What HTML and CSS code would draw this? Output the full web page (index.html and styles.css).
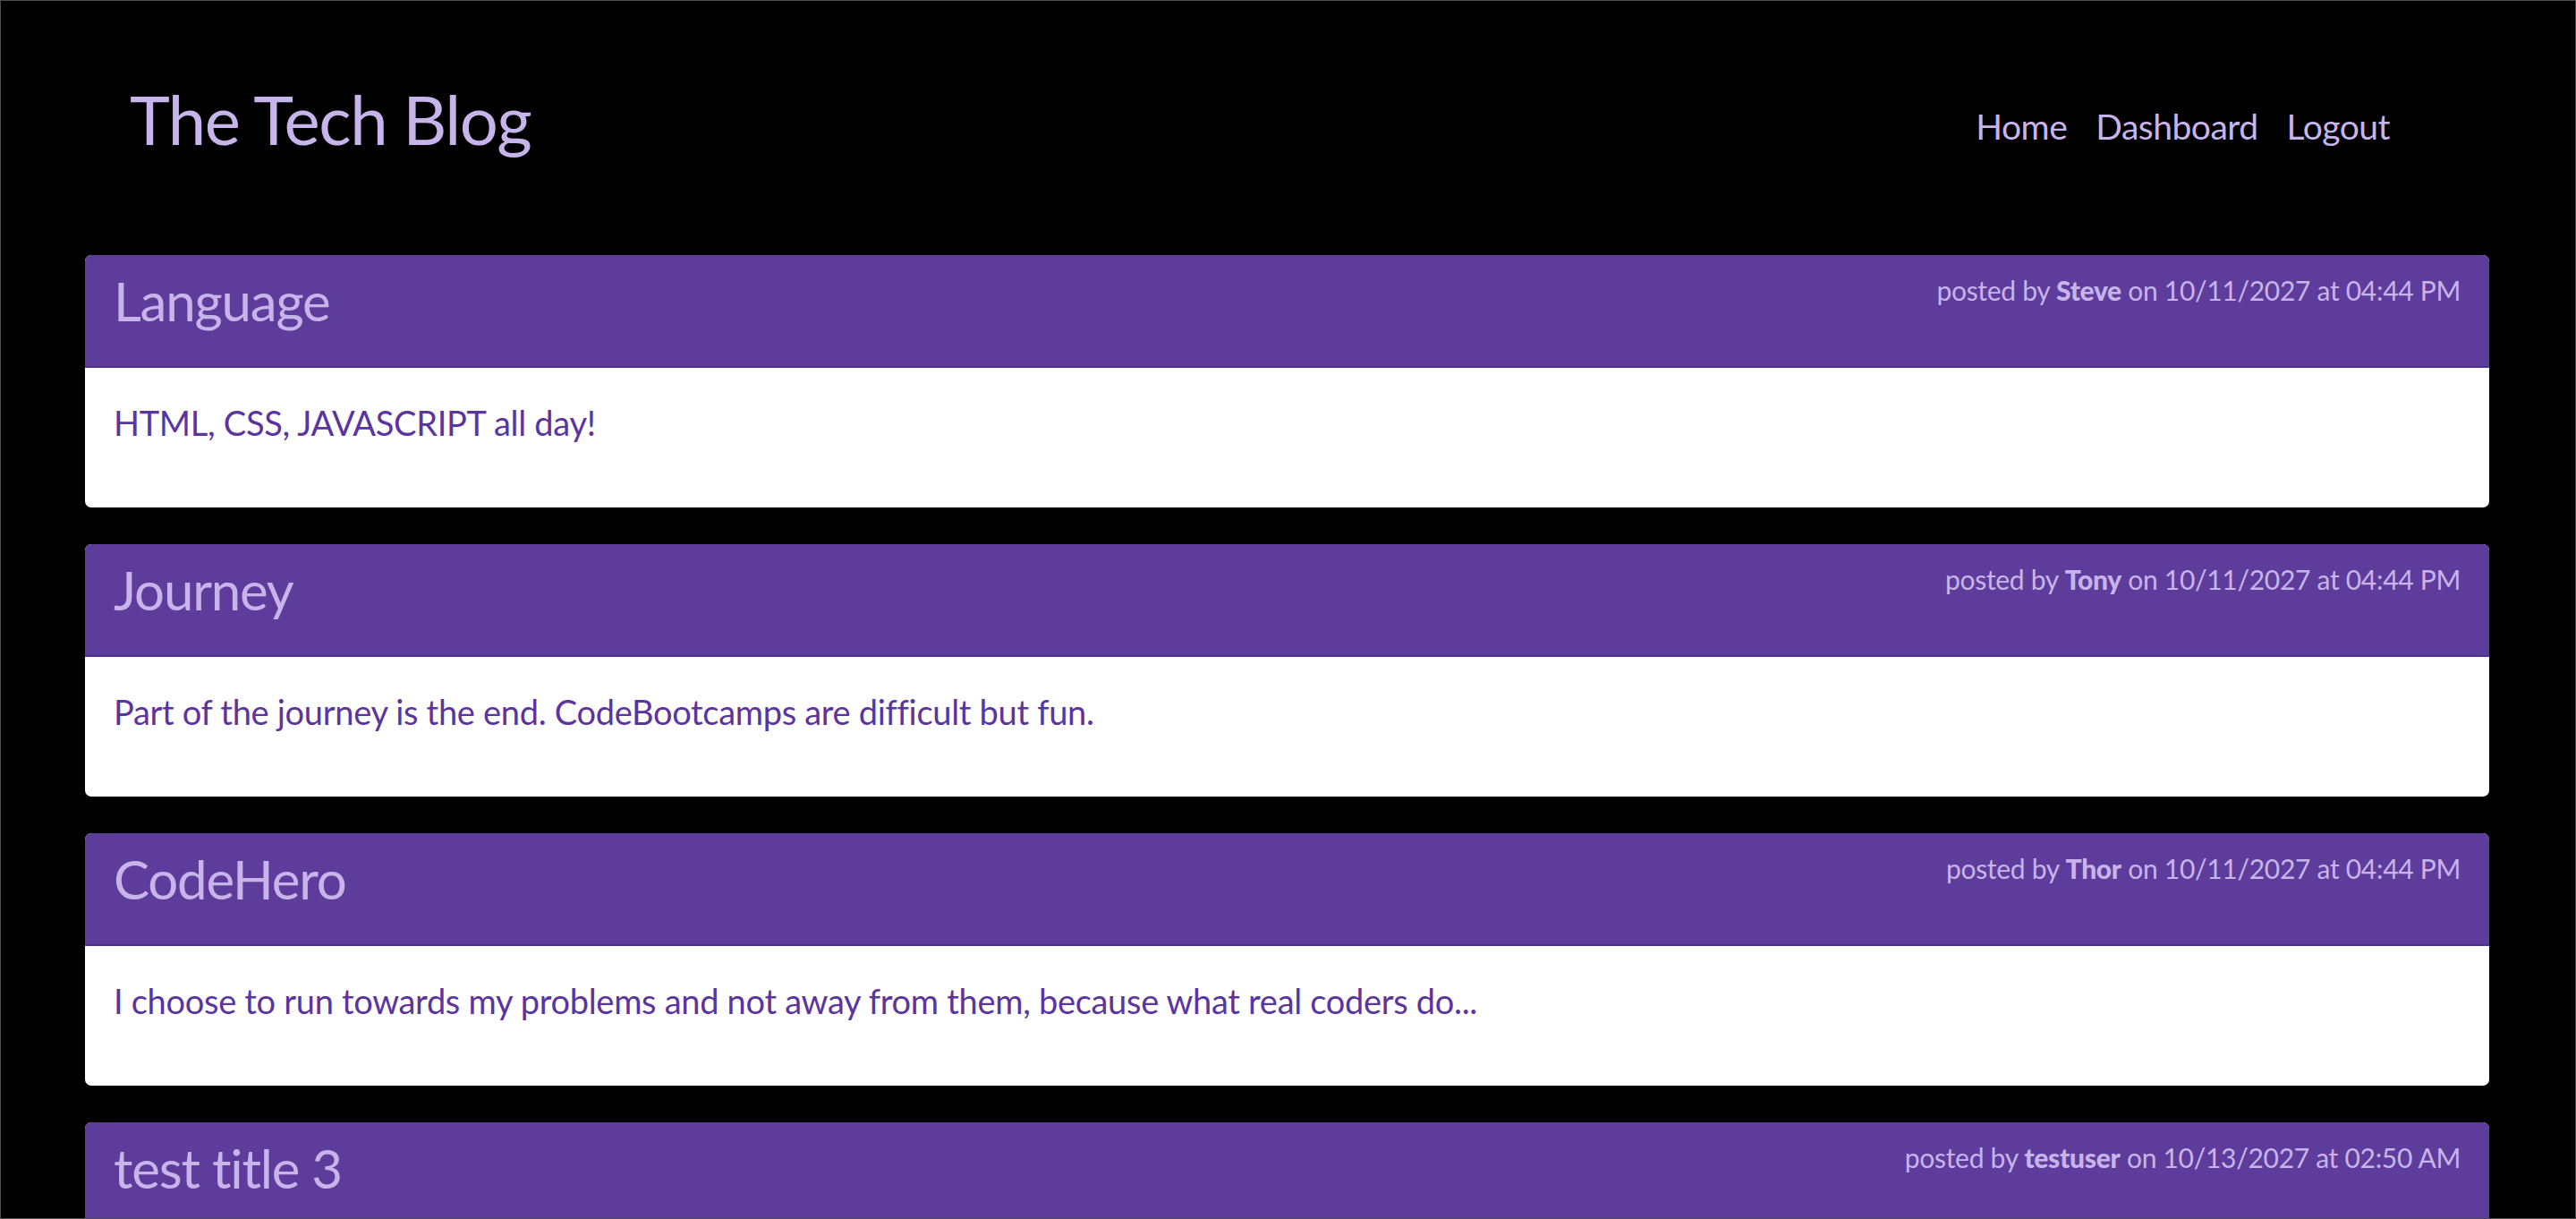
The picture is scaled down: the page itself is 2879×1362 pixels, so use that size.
FILE: index.html
```html
<!DOCTYPE html>
<html lang="en">
<head>
<meta charset="utf-8">
<title>The Tech Blog</title>
<link rel="stylesheet" href="styles.css">
</head>
<body>
<div class="page">
  <header class="site-header">
    <h1 class="brand">The Tech Blog</h1>
    <nav class="nav">
      <a href="#">Home</a>
      <a href="#">Dashboard</a>
      <a href="#">Logout</a>
    </nav>
  </header>
  <main class="posts">
    <article class="post">
      <div class="post-head">
        <h2 class="post-title">Language</h2>
        <p class="post-meta">posted by <strong>Steve</strong> on 10/11/2027 at 04:44 PM</p>
      </div>
      <div class="post-body">HTML, CSS, JAVASCRIPT all day!</div>
    </article>
    <article class="post">
      <div class="post-head">
        <h2 class="post-title">Journey</h2>
        <p class="post-meta">posted by <strong>Tony</strong> on 10/11/2027 at 04:44 PM</p>
      </div>
      <div class="post-body">Part of the journey is the end. CodeBootcamps are difficult but fun.</div>
    </article>
    <article class="post">
      <div class="post-head">
        <h2 class="post-title">CodeHero</h2>
        <p class="post-meta">posted by <strong>Thor</strong> on 10/11/2027 at 04:44 PM</p>
      </div>
      <div class="post-body">I choose to run towards my problems and not away from them, because what real coders do...</div>
    </article>
    <article class="post">
      <div class="post-head">
        <h2 class="post-title">test title 3</h2>
        <p class="post-meta">posted by <strong>testuser</strong> on 10/13/2027 at 02:50 AM</p>
      </div>
      <div class="post-body"></div>
    </article>
  </main>
</div>
</body>
</html>
```

FILE: styles.css
```css
html, body {
  margin: 0;
  padding: 0;
  background: #000;
}

body {
  font-family: Lato, "Open Sans", sans-serif;
}

.page {
  box-sizing: border-box;
  height: 100vh;
  overflow: hidden;
  border: 1px solid #4d4d4d;
  background: #000;
}

.site-header {
  box-sizing: border-box;
  height: 284px;
  display: flex;
  justify-content: space-between;
  align-items: flex-start;
  padding: 86px 207px 0 144px;
}

.brand {
  margin: 0;
  font-size: 76px;
  font-weight: 400;
  line-height: 1.2;
  letter-spacing: -1.4px;
  color: #c7b4ea;
}

.nav {
  display: flex;
  gap: 32px;
  margin-top: 31px;
}

.nav a {
  font-size: 39px;
  line-height: 1.2;
  color: #c7b4ea;
  text-decoration: none;
  letter-spacing: -0.5px;
}

.posts {
  display: flex;
  flex-direction: column;
  gap: 41px;
  padding: 0 96px 0 94px;
}

.post {
  border-radius: 7px;
  overflow: hidden;
  background: #fff;
}

.post-head {
  box-sizing: border-box;
  height: 126px;
  display: flex;
  justify-content: space-between;
  align-items: flex-start;
  padding: 15px 32px 0;
  background: #5e3c9c;
  border-bottom: 2px solid #50308a;
}

.post-title {
  margin: 0;
  font-size: 60px;
  font-weight: 400;
  line-height: 1.2;
  letter-spacing: -1.2px;
  color: #c7b4ea;
}

.post-meta {
  margin: 6px 0 0;
  font-size: 30px;
  line-height: 1.2;
  letter-spacing: -0.3px;
  color: #c7b4ea;
}

.post-meta strong {
  font-weight: 900;
}

.post-body {
  box-sizing: border-box;
  height: 156px;
  padding: 39px 32px 0;
  font-size: 38px;
  line-height: 1.2;
  letter-spacing: -0.3px;
  color: #5a35a0;
}
```
